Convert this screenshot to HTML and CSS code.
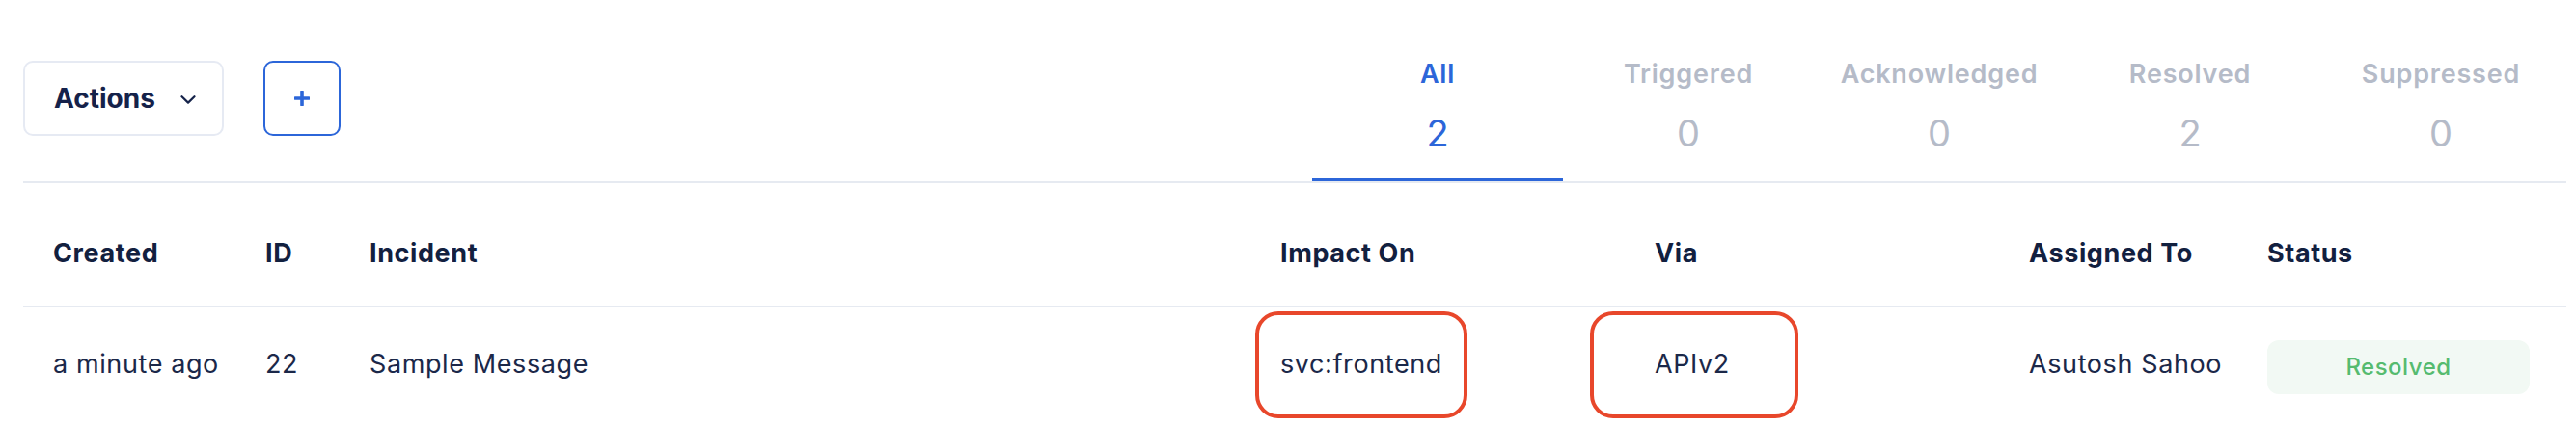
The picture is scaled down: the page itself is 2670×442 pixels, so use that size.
FILE: index.html
```html
<!DOCTYPE html>
<html lang="en">
<head>
<meta charset="utf-8">
<title>Incidents</title>
<link rel="stylesheet" href="styles.css">
</head>
<body>
<div class="page">
  <div class="topbar">
    <div class="toolbar">
      <button class="btn-actions" type="button">
        <span>Actions</span>
        <svg class="chev" width="16" height="9" viewBox="0 0 16 9"><path d="M1.5 1.2 L8 7.6 L14.5 1.2" fill="none" stroke="#16234a" stroke-width="2.2" stroke-linecap="round" stroke-linejoin="round"/></svg>
      </button>
      <button class="btn-add" type="button" aria-label="Add">
        <svg width="16" height="16" viewBox="0 0 16 16"><path d="M8 1v14M1 8h14" fill="none" stroke="#2c66d9" stroke-width="3.6" stroke-linecap="round"/></svg>
      </button>
    </div>
    <div class="tabs">
      <div class="tab active"><span class="tab-label">All</span><span class="tab-count">2</span></div>
      <div class="tab"><span class="tab-label">Triggered</span><span class="tab-count">0</span></div>
      <div class="tab"><span class="tab-label">Acknowledged</span><span class="tab-count">0</span></div>
      <div class="tab"><span class="tab-label">Resolved</span><span class="tab-count">2</span></div>
      <div class="tab"><span class="tab-label">Suppressed</span><span class="tab-count">0</span></div>
    </div>
  </div>
  <div class="table">
    <div class="row head">
      <div class="cell">Created</div>
      <div class="cell">ID</div>
      <div class="cell">Incident</div>
      <div class="cell">Impact On</div>
      <div class="cell">Via</div>
      <div class="cell">Assigned To</div>
      <div class="cell">Status</div>
    </div>
    <div class="row body">
      <div class="cell">a minute ago</div>
      <div class="cell">22</div>
      <div class="cell">Sample Message</div>
      <div class="cell marked"><span class="mark mark-impact"></span>svc:frontend</div>
      <div class="cell marked"><span class="mark mark-via"></span>APIv2</div>
      <div class="cell">Asutosh Sahoo</div>
      <div class="cell status"><span class="badge">Resolved</span></div>
    </div>
  </div>
</div>
</body>
</html>
```
FILE: styles.css
```css
* { box-sizing: border-box; }
html, body { margin: 0; background: #ffffff; }
body {
  font-family: Inter, "Liberation Sans", sans-serif;
  color: #14213f;
}
.page {
  padding: 0 10px 0 24px;
}
.topbar {
  display: flex;
  justify-content: space-between;
  height: 190px;
  border-bottom: 2px solid #e6eaf1;
}
.toolbar {
  display: flex;
  gap: 41px;
  padding-top: 63px;
  align-items: flex-start;
}
.btn-actions {
  display: flex;
  align-items: center;
  gap: 26px;
  width: 208px;
  height: 78px;
  padding: 0 0 0 30px;
  border: 2px solid #e6eaf3;
  border-radius: 10px;
  background: #fff;
  font-family: inherit;
  font-size: 28px;
  font-weight: 700;
  color: #15224a;
  letter-spacing: 0;
}
.chev { display: block; margin-top: 2px; }
.btn-add {
  display: flex;
  align-items: center;
  justify-content: center;
  width: 80px;
  height: 78px;
  padding: 0;
  border: 2px solid #2c66d9;
  border-radius: 10px;
  background: #fff;
}
.btn-add svg { display: block; }
.tabs {
  display: flex;
}
.tab {
  width: 260px;
  display: flex;
  flex-direction: column;
  align-items: center;
  padding-top: 60px;
  border-bottom: 3px solid transparent;
  color: #b5bbc8;
}
.tab-label {
  font-size: 27px;
  line-height: 33px;
  font-weight: 600;
  letter-spacing: 0.8px;
}
.tab-count {
  margin-top: 22px;
  font-size: 38px;
  line-height: 46px;
  font-weight: 400;
}
.tab.active {
  color: #2c66d9;
  border-bottom-color: #2c66d9;
}
.row {
  display: grid;
  grid-template-columns: 220px 108px 944px 388px 388px 247px 1fr;
}
.cell {
  padding-left: 31px;
  font-size: 27px;
  line-height: 33px;
  white-space: nowrap;
}
.row.head {
  padding: 56px 0 38px;
  border-bottom: 2px solid #e6eaf1;
}
.row.head .cell {
  font-weight: 700;
  color: #12203f;
  letter-spacing: 0.6px;
}
.row.body {
  padding: 34px 0 40px;
  align-items: start;
}
.row.body .cell {
  padding-top: 8px;
  color: #1b2849;
  letter-spacing: 0.6px;
}
.cell.marked { position: relative; }
.mark {
  position: absolute;
  top: -30px;
  height: 111px;
  border: 4px solid #e8472b;
  border-radius: 24px;
}
.mark-impact { left: 5px; width: 220px; }
.mark-via { left: -36px; width: 216px; }
.row.body .cell.status { padding-top: 0; }
.badge {
  display: block;
  width: 272px;
  height: 56px;
  line-height: 56px;
  text-align: center;
  background: #f2f9f4;
  border-radius: 12px;
  color: #55bb6f;
  font-size: 24px;
  font-weight: 500;
  letter-spacing: 0.5px;
}
```
